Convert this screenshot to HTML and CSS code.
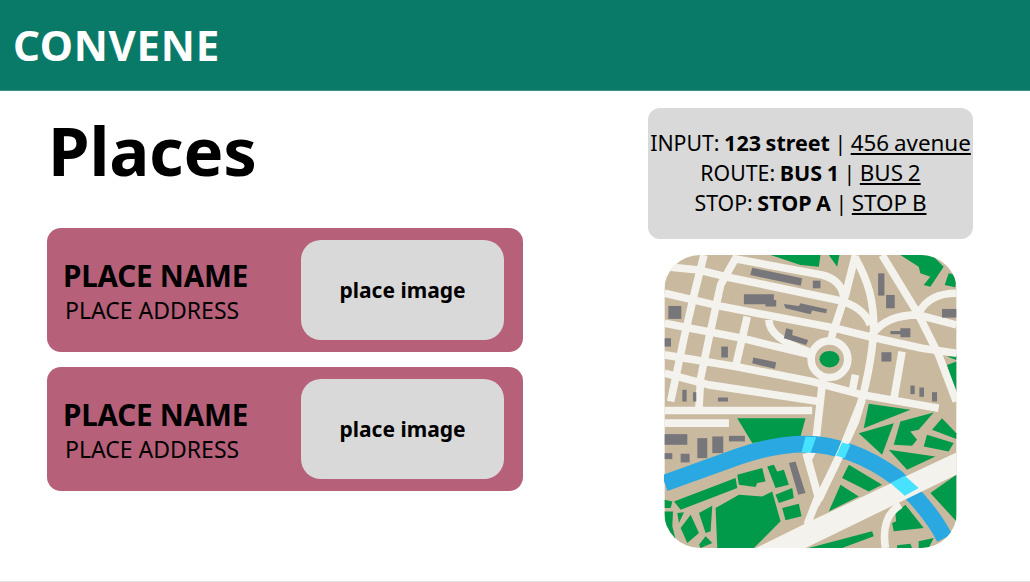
FILE: index.html
```html
<!DOCTYPE html>
<html lang="en">
<head>
<meta charset="utf-8">
<title>Convene</title>
<link rel="stylesheet" href="styles.css">
</head>
<body>
<header class="topbar"><div class="brand">CONVENE</div></header>
<main class="content">
  <section class="places">
    <h1 class="title">Places</h1>
    <div class="card-list">
      <article class="card">
        <div class="card-text">
          <div class="place-name">PLACE NAME</div>
          <div class="place-address">PLACE ADDRESS</div>
        </div>
        <div class="place-image">place image</div>
      </article>
      <article class="card">
        <div class="card-text">
          <div class="place-name">PLACE NAME</div>
          <div class="place-address">PLACE ADDRESS</div>
        </div>
        <div class="place-image">place image</div>
      </article>
    </div>
  </section>
  <aside class="side">
    <div class="filters">
      <div>INPUT: <b>123 street</b> | <u>456 avenue</u></div>
      <div>ROUTE: <b>BUS 1</b> | <u>BUS 2</u></div>
      <div>STOP: <b>STOP A</b> | <u>STOP B</u></div>
    </div>
    <svg class="map" viewBox="27 30 876 880" role="img" aria-label="City map">
      <rect class="m-land" x="27" y="30" width="876" height="880"/>
      <g class="m-green">
        <polygon points="345,30 495,30 490,65 435,60"/>
        <polygon points="520,30 552,30 545,65"/>
        <polygon points="735,30 830,30 865,65 825,125 805,120 825,95 795,85 790,65"/>
        <polygon points="880,85 903,90 900,127 868,120"/>
        <polygon points="875,335 903,332 903,345"/>
        <polygon points="875,360 903,350 903,455"/>
      </g>
      <g class="m-road">
        <path d="M27 65L130 75L210 95L545 165C590 175 630 200 645 240"/>
        <path d="M230 40L500 90C540 100 560 125 565 155"/>
        <path d="M27 145L200 185L540 250L640 275L800 310L903 325"/>
        <path d="M27 235L260 280L340 300L530 345"/>
        <path d="M27 330L240 365L470 410L620 450L850 490"/>
        <path d="M27 385L160 420L490 470"/>
        <path d="M145 30L115 150L85 280L45 470"/>
        <path d="M240 40L195 120L160 280L135 400L130 490"/>
        <path d="M275 215L240 365"/>
        <path d="M600 30L570 150L530 270L500 420L480 600L460 640"/>
        <path d="M600 40C640 110 655 170 655 250C650 350 625 450 600 530L540 660L480 780"/>
        <path d="M680 30L790 210L850 330L903 470"/>
        <path d="M650 270C680 225 730 210 790 210L903 240"/>
        <path d="M790 205C810 165 850 145 903 145"/>
        <path d="M740 320L715 465"/>
        <path d="M340 225C340 260 380 295 460 320"/>
        <path d="M600 390L590 440"/>
        <path d="M27 497L470 497"/>
        <path d="M27 535L220 535"/>
      </g>
      <g class="m-grey">
        <polygon points="290,68 440,100 436,122 284,90"/>
        <rect x="472" y="107" width="23" height="23"/>
        <polygon points="265,148 355,148 355,165 362,165 362,185 330,185 330,178 265,178"/>
        <polygon points="385,177 430,183 435,175 515,193 512,205 470,197 465,208 390,190"/>
        <rect x="668" y="85" width="19" height="67"/>
        <rect x="692" y="150" width="26" height="40"/>
        <rect x="860" y="192" width="43" height="26"/>
        <rect x="38" y="183" width="39" height="39"/>
        <rect x="27" y="280" width="19" height="25"/>
        <polygon points="392,250 412,255 410,270 458,285 452,300 385,280"/>
        <polygon points="705,258 735,258 735,250 765,250 765,277 735,277 735,268 705,268"/>
        <rect x="678" y="322" width="30" height="28"/>
        <rect x="197" y="305" width="20" height="33"/>
        <polygon points="293,338 362,352 358,372 290,355"/>
        <rect x="765" y="422" width="13" height="26"/>
        <rect x="792" y="428" width="14" height="28"/>
        <rect x="830" y="442" width="15" height="28"/>
        <rect x="80" y="435" width="13" height="35"/>
        <rect x="112" y="442" width="10" height="28"/>
        <rect x="187" y="458" width="30" height="12"/>
      </g>
      <circle class="m-ring" cx="522" cy="343" r="55"/>
      <ellipse class="m-pond" cx="522" cy="343" rx="30" ry="25"/>
      <g transform="translate(0 465)">
        <g class="m-green">
          <polygon points="245,55 450,55 435,110 290,130"/>
          <polygon points="640,12 765,30 625,85"/>
          <polygon points="610,100 715,70 680,165"/>
          <polygon points="735,65 835,38 790,90 765,95 785,120 770,138 715,135"/>
          <polygon points="860,55 903,100 903,118 830,90"/>
          <polygon points="815,105 895,130 880,155 805,140"/>
          <polygon points="700,150 840,170 755,210"/>
          <polygon points="580,195 680,255 640,275 560,235"/>
          <polygon points="555,255 610,290 520,335"/>
          <polygon points="825,280 903,225 903,365"/>
          <polygon points="245,225 320,205 330,245 305,250 300,262 250,255"/>
          <polygon points="335,200 355,195 365,215 385,210 400,255 360,265"/>
          <polygon points="360,285 410,265 415,295 370,310"/>
          <polygon points="380,325 430,312 438,350 390,362"/>
          <polygon points="55,305 240,235 245,265 75,330"/>
          <polygon points="180,325 250,285 320,290 350,275 375,365 295,445 185,445"/>
          <polygon points="130,340 170,318 165,395 150,400"/>
          <polygon points="75,385 105,345 130,400 95,430"/>
          <polygon points="27,300 50,305 45,325 27,325"/>
          <polygon points="27,335 52,335 50,380 60,420 27,420"/>
          <polygon points="65,340 85,338 70,370"/>
          <polygon points="130,435 150,410 170,430 135,445"/>
          <polygon points="460,445 650,395 655,410 560,445"/>
          <polygon points="720,340 750,315 805,385 715,395 710,370 722,365"/>
          <polygon points="725,437 765,432 770,445 725,445"/>
          <polygon points="790,425 835,415 820,445 790,445"/>
        </g>
        <g class="m-grey">
          <rect x="27" y="103" width="68" height="32"/>
          <rect x="125" y="115" width="30" height="60"/>
          <rect x="170" y="110" width="33" height="50"/>
          <rect x="220" y="108" width="48" height="17"/>
          <rect x="27" y="160" width="23" height="18"/>
          <rect x="75" y="162" width="27" height="26"/>
          <polygon points="400,190 420,185 450,280 428,285"/>
        </g>
        <path class="m-river" d="M27 250L250 170C330 142 390 133 450 133C540 133 640 170 725 235C770 280 830 340 868 415"/>
        <g class="m-road">
          <path d="M452 160L488 290L455 375"/>
          <path d="M620 0L560 150L490 300"/>
          <path d="M690 445C680 380 695 340 735 315"/>
        </g>
        <polygon class="m-road-wide" points="290,450 470,362 903,158 903,225 440,450"/>
        <g class="m-bright">
          <polygon points="450,110 482,112 466,158 438,158"/>
          <polygon points="560,128 585,135 568,175 542,168"/>
          <polygon points="748,228 790,265 748,288 705,250"/>
        </g>
      </g>
    </svg>
  </aside>
</main>
</body>
</html>
```
FILE: styles.css
```css
* { box-sizing: border-box; }
html, body { margin: 0; height: 582px; overflow: hidden; }
body {
  background: #fff;
  color: #000;
  font-family: "Noto Sans", "Liberation Sans", sans-serif;
  border-bottom: 1px solid #e4e4e4;
}
.topbar {
  height: 91px;
  background: #0a7a68;
  border-bottom: 1px solid #3a9486;
  padding: 0 13px;
  display: flex;
  align-items: center;
}
.brand {
  color: #fff;
  font-size: 42px;
  font-weight: 700;
  line-height: 1;
  letter-spacing: 0.7px;
}
.content {
  display: grid;
  grid-template-columns: 601px 325px;
  padding-left: 47px;
}
.title {
  margin: 14px 0 0 1px;
  font-size: 67px;
  font-weight: 700;
  line-height: 91px;
  letter-spacing: -0.2px;
}
.card-list {
  display: flex;
  flex-direction: column;
  gap: 15px;
  margin-top: 32px;
}
.card {
  width: 476px;
  height: 124px;
  background: #b7607a;
  border-radius: 14px;
  padding: 12px 19px 12px 16px;
  display: flex;
  justify-content: space-between;
  align-items: stretch;
}
.card-text {
  display: flex;
  flex-direction: column;
  justify-content: center;
  padding-top: 3px;
}
.place-name {
  font-size: 29.6px;
  font-weight: 700;
  line-height: 36px;
  letter-spacing: -0.2px;
}
.place-address {
  font-size: 23px;
  line-height: 32px;
  margin-left: 2px;
}
.place-image {
  width: 203px;
  background: #d9d9d9;
  border-radius: 20px;
  display: flex;
  align-items: center;
  justify-content: center;
  font-size: 21px;
  font-weight: 700;
}
.side {
  display: flex;
  flex-direction: column;
  padding-top: 17px;
}
.filters {
  height: 131px;
  background: #d9d9d9;
  border-radius: 12px;
  display: flex;
  flex-direction: column;
  justify-content: center;
  align-items: center;
  font-size: 21.3px;
  line-height: 30px;
  word-spacing: -1px;
  white-space: nowrap;
  padding-bottom: 1px;
}
.filters b { font-size: 21.5px; }
.filters u { font-size: 22.4px; }
.map {
  display: block;
  width: 293px;
  height: 293px;
  margin: 16px 0 0 16px;
  border-radius: 36px;
}
.m-land { fill: #c9b99f; }
.m-green polygon { fill: #009a4a; }
.m-grey rect, .m-grey polygon { fill: #77777b; }
.m-road path { fill: none; stroke: #f3f2ec; stroke-width: 23; stroke-linejoin: round; }
.m-road-wide { fill: #f3f2ec; }
.m-ring { fill: #c9b99f; stroke: #f3f2ec; stroke-width: 23; }
.m-pond { fill: #009a4a; }
.m-river { fill: none; stroke: #2aa8e2; stroke-width: 50; }
.m-bright polygon { fill: #46e2ff; }
```
